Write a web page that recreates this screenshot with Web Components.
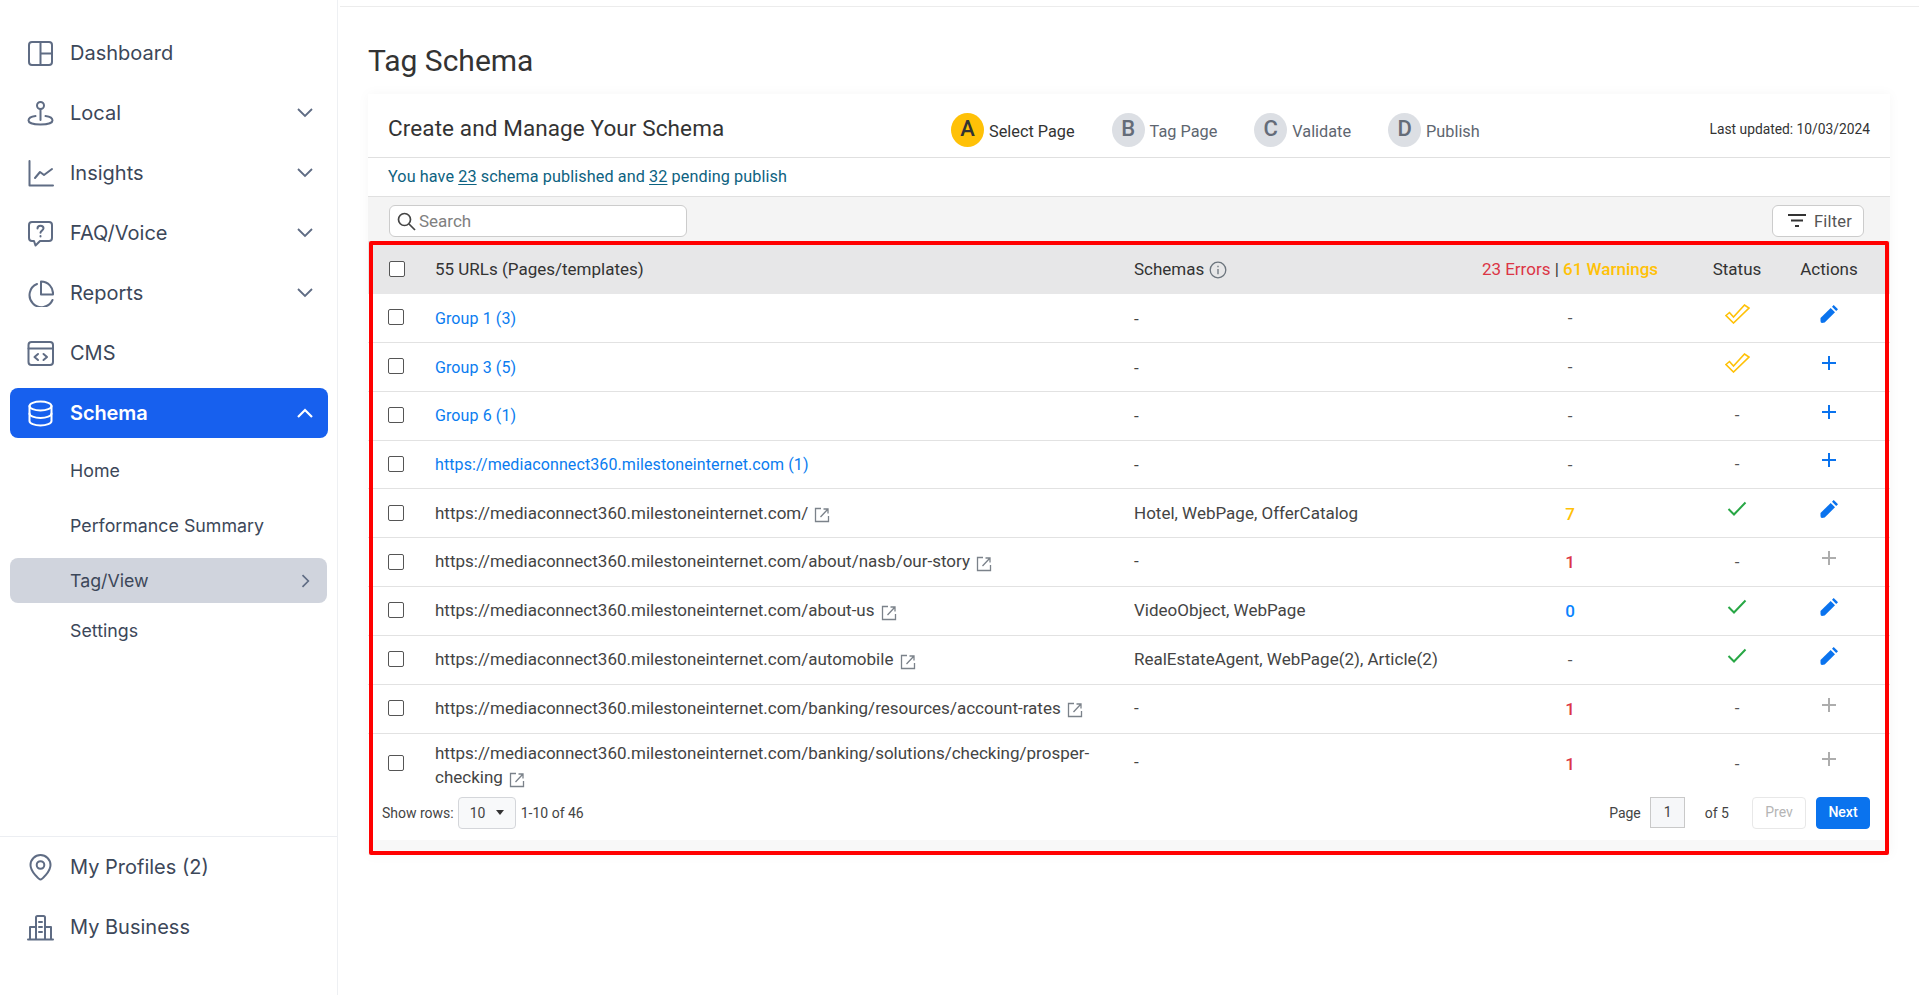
<!DOCTYPE html>
<html lang="en">
<head>
<meta charset="utf-8">
<title>Tag Schema</title>
<style>
  html,body{ margin:0; height:100%; background:#fff; overflow:hidden; }
  body{ font-family:Roboto, "Liberation Sans", sans-serif; }
</style>
</head>
<body>
<app-shell>
  <side-bar slot="side">
    <nav-item icon="dashboard">Dashboard</nav-item>
    <nav-item icon="local" chevron="down">Local</nav-item>
    <nav-item icon="insights" chevron="down">Insights</nav-item>
    <nav-item icon="faq" chevron="down">FAQ/Voice</nav-item>
    <nav-item icon="reports" chevron="down">Reports</nav-item>
    <nav-item icon="cms">CMS</nav-item>
    <nav-item icon="schema" chevron="up" active>Schema</nav-item>
    <sub-item>Home</sub-item>
    <sub-item>Performance Summary</sub-item>
    <sub-item current>Tag/View</sub-item>
    <sub-item tight>Settings</sub-item>
    <nav-item slot="bottom" icon="profile">My Profiles (2)</nav-item>
    <nav-item slot="bottom" icon="business">My Business</nav-item>
  </side-bar>
  <schema-card>
    <schema-table>
      <schema-row head>
        <span slot="url">55 URLs (Pages/templates)</span>
        <span slot="schemas">Schemas <i-icon name="info"></i-icon></span>
        <span slot="issues"><b style="color:#dc3545;font-weight:450">23 Errors</b> | <b style="color:#ffc107;font-weight:500">61 Warnings</b></span>
        <span slot="status">Status</span>
        <span slot="action">Actions</span>
      </schema-row>
      <schema-row link status="double" action="edit"><span slot="url">Group 1 (3)</span></schema-row>
      <schema-row link status="double" action="add"><span slot="url">Group 3 (5)</span></schema-row>
      <schema-row link action="add"><span slot="url">Group 6 (1)</span></schema-row>
      <schema-row link action="add"><span slot="url">https://mediaconnect360.milestoneinternet.com (1)</span></schema-row>
      <schema-row ext value="7" tone="warn" status="ok" action="edit"><span slot="url">https://mediaconnect360.milestoneinternet.com/</span><span slot="schemas">Hotel, WebPage, OfferCatalog</span></schema-row>
      <schema-row ext value="1" tone="err" action="off"><span slot="url">https://mediaconnect360.milestoneinternet.com/about/nasb/our-story</span></schema-row>
      <schema-row ext value="0" tone="info" status="ok" action="edit"><span slot="url">https://mediaconnect360.milestoneinternet.com/about-us</span><span slot="schemas">VideoObject, WebPage</span></schema-row>
      <schema-row ext status="ok" action="edit"><span slot="url">https://mediaconnect360.milestoneinternet.com/automobile</span><span slot="schemas">RealEstateAgent, WebPage(2), Article(2)</span></schema-row>
      <schema-row ext value="1" tone="err" action="off"><span slot="url">https://mediaconnect360.milestoneinternet.com/banking/resources/account-rates</span></schema-row>
      <schema-row ext tall value="1" tone="err" action="off"><span slot="url">https://mediaconnect360.milestoneinternet.com/banking/solutions/checking/prosper-checking</span></schema-row>
      <table-footer slot="footer"></table-footer>
    </schema-table>
  </schema-card>
</app-shell>

<script>
/* ============================================================
   Icons
   ============================================================ */
const ICONS = {
  dashboard:`<rect x="2" y="2" width="23" height="23" rx="3"/><path d="M13.5 2v23M13.5 13.5H25"/>`,
  local:`<circle cx="13.5" cy="5.5" r="3.5"/><path d="M13.5 9v11"/><path d="M8.5 16C4.500 16.500 1.500 18 1.500 20.500c0 2.500 5.300 4 12 4s12-1.500 12-4c0-2.500-3-4-7-4.500"/>`,
  insights:`<path d="M2.5 1v24.500H26"/><path d="M8 18l5-6 4 3 8-6"/>`,
  faq:`<path d="M5 2h17a3 3 0 0 1 3 3v13a3 3 0 0 1-3 3h-9l-4.500 4.500L7 21H5a3 3 0 0 1-3-3V5a3 3 0 0 1 3-3z"/><path d="M10.5 8.500c0-1.700 1.200-2.700 3-2.700s3 1 3 2.500c0 2.300-3 2.300-3 4.400"/><path d="M13.5 16v.5"/>`,
  reports:`<path d="M10 4A12 12 0 1 0 25.500 20"/><path d="M14 1.500A12 12 0 0 1 26 14.500H14z"/>`,
  cms:`<rect x="1.5" y="2" width="24.500" height="23" rx="3"/><path d="M1.5 8.500H26"/><path d="M11 14l-3.500 3 3.500 3M16.500 14l3.500 3-3.500 3"/>`,
  schema:`<ellipse cx="13.5" cy="6" rx="11" ry="4.500"/><path d="M2.5 6v15c0 2.500 5 4.500 11 4.500s11-2 11-4.500V6"/><path d="M2.5 13.500c0 2.500 5 4.500 11 4.500s11-2 11-4.500"/>`,
  profile:`<path d="M13.5 25.500c-1 0-10-7.500-10-14.500a10 10 0 0 1 20 0c0 7-9 14.500-10 14.500z"/><circle cx="13.5" cy="11" r="3.800"/>`,
  business:`<path d="M1 25.500h25"/><path d="M3 25V13h6M24 25V13h-6"/><path d="M9 25V3.500a1.500 1.500 0 0 1 1.500-1.500h6a1.500 1.500 0 0 1 1.500 1.500V25"/><path d="M12 8h3M12 13h3M12 18h3"/>`
};
const chevrons = {
  down:`<path d="M1 1l7 7 7-7"/>`,
  up:`<path d="M1 9l7-7 7 7"/>`,
  right:`<path d="M3 1l7 7-7 7"/>`
};

/* small table glyphs */
class IIcon extends HTMLElement{
  connectedCallback(){
    const glyphs = {
      info:`<svg width="18" height="18" viewBox="0 0 18 18" fill="none" stroke="#6c757d" stroke-width="1.3"><circle cx="9" cy="9" r="7.8"/><path d="M9 8v5.200M9 4.700v1.500"/></svg>`,
      ext:`<svg width="16" height="16" viewBox="0 0 16 16" fill="none" stroke="#7b828a" stroke-width="1.3"><path d="M7 1.500H1.500v13h13V9"/><path d="M6.500 10L13.500 2.500M9.500 2h4.500v4.500"/></svg>`,
      double:`<svg width="25" height="20" viewBox="0 0 25 20" fill="none" stroke="#ffc107" stroke-width="1.6"><path d="M1 11.500L4.500 8.500 8.500 13 19.500 1 24 4 8.500 19z"/></svg>`,
      ok:`<svg width="20" height="16" viewBox="0 0 20 16" fill="none" stroke="#28a745" stroke-width="2"><path d="M1.500 8l5.500 5.500L18.500 1.500"/></svg>`,
      edit:`<svg width="18" height="18" viewBox="0 0 18 18" fill="#0a73ee"><path d="M.5 16v-3L10.700 3l4.300 4.300L4.700 17.500 2 18q-1.500 0-1.500-2z"/><path d="M12 1.800L13.700 0 18 4.300 16.200 6z"/></svg>`,
      add:`<svg width="16" height="16" viewBox="0 0 16 16" fill="none" stroke="#0a73ee" stroke-width="2"><path d="M8 1v14M1 8h14"/></svg>`,
      off:`<svg width="16" height="16" viewBox="0 0 16 16" fill="none" stroke="#adadad" stroke-width="2"><path d="M8 1v14M1 8h14"/></svg>`,
      search:`<svg width="19" height="19" viewBox="0 0 19 19" fill="none" stroke="#444" stroke-width="1.7"><circle cx="7.500" cy="7.500" r="6"/><path d="M12 12l6 6"/></svg>`,
      filter:`<svg width="18" height="14" viewBox="0 0 18 14" fill="#333"><rect width="18" height="2"/><rect x="3" y="5.500" width="12" height="2"/><rect x="7" y="11" width="4" height="2"/></svg>`
    };
    if(!this.shadowRoot){
      this.attachShadow({mode:"open"}).innerHTML = `
        <style>:host{display:inline-flex;vertical-align:middle}</style>${glyphs[this.getAttribute("name")]||""}`;
    }
  }
}
customElements.define("i-icon", IIcon);

/* ============================================================
   Sidebar
   ============================================================ */
class NavItem extends HTMLElement{
  constructor(){
    super();
    const chev = this.getAttribute("chevron");
    this.attachShadow({mode:"open"}).innerHTML = `
      <style>
        :host{
          display:flex; align-items:center; box-sizing:border-box;
          height:50px; width:318px; margin-left:10px; padding-left:17px;
          border-radius:8px;
          color:#3c4759;
          font:400 20px Inter, sans-serif;
        }
        :host([active]){ background:#1760ee; color:#fff; font-weight:600; letter-spacing:-.1px; }
        .ic{ width:27px; height:27px; flex:none; margin-right:16px; fill:none; stroke:#5f6c84; stroke-width:2; stroke-linecap:round; stroke-linejoin:round; }
        :host([active]) .ic{ stroke:#fff; }
        .ch{ margin-left:auto; margin-right:15px; width:16px; height:10px; fill:none; stroke:#5f6c84; stroke-width:1.8; }
        :host([active]) .ch{ stroke:#fff; stroke-width:2.2; }
      </style>
      <svg class="ic" viewBox="0 0 27 27">${ICONS[this.getAttribute("icon")]||""}</svg>
      <slot></slot>
      ${chev ? `<svg class="ch" viewBox="0 0 16 10">${chevrons[chev]}</svg>` : ""}
    `;
  }
}
customElements.define("nav-item", NavItem);

class SubItem extends HTMLElement{
  constructor(){
    super();
    this.attachShadow({mode:"open"}).innerHTML = `
      <style>
        :host{
          display:flex; align-items:center; box-sizing:border-box;
          height:45px; width:317px; margin-left:10px; padding-left:60px;
          border-radius:8px;
          color:#3c4759;
          font:400 17.8px Inter, sans-serif;
        }
        :host([current]){ background:#d0d4dd; }
        :host([tight]){ margin-top:-5px; }
        svg{ margin-left:auto; margin-right:17px; width:10px; height:16px; fill:none; stroke:#5f6c84; stroke-width:2; }
      </style>
      <slot></slot>
      ${this.hasAttribute("current") ? `<svg viewBox="0 0 12 16">${chevrons.right}</svg>` : ""}
    `;
  }
}
customElements.define("sub-item", SubItem);

class SideBar extends HTMLElement{
  constructor(){
    super();
    this.attachShadow({mode:"open"}).innerHTML = `
      <style>
        :host{
          display:flex; flex-direction:column; box-sizing:border-box;
          width:338px; height:995px; flex:none;
          border-right:1px solid #eef0f3;
        }
        .top{ display:flex; flex-direction:column; gap:10px; padding-top:28px; }
        .bottom{
          margin-top:auto; display:flex; flex-direction:column; gap:10px;
          padding:5px 0 43px; border-top:1px solid #eceef2;
        }
      </style>
      <div class="top"><slot></slot></div>
      <div class="bottom"><slot name="bottom"></slot></div>
    `;
  }
}
customElements.define("side-bar", SideBar);

/* ============================================================
   Page frame
   ============================================================ */
class AppShell extends HTMLElement{
  constructor(){
    super();
    this.attachShadow({mode:"open"}).innerHTML = `
      <style>
        :host{ display:flex; width:1919px; height:995px; color:#333; }
        main{ flex:1; min-width:0; }
        .bar{ height:6px; margin-left:2px; border-bottom:1px solid #ececec; }
        h1{ margin:0; padding:39px 0 0 30px; height:48px; font:400 30px/30px Roboto, sans-serif; color:#333; }
      </style>
      <slot name="side"></slot>
      <main>
        <div class="bar"></div>
        <h1>Tag Schema</h1>
        <slot></slot>
      </main>
    `;
  }
}
customElements.define("app-shell", AppShell);

class StepBadge extends HTMLElement{
  constructor(){
    super();
    this.attachShadow({mode:"open"}).innerHTML = `
      <style>
        :host{ display:inline-flex; align-items:center; gap:5px; font:400 16.3px Roboto, sans-serif; color:#5e6670; }
        :host([on]){ color:#333; }
        b{
          width:33px; height:34px; border-radius:50%;
          background:#dcdfe4; color:#646c78;
          font:500 22px/32px Roboto, sans-serif; text-align:center;
        }
        :host([on]) b{ background:#ffc107; color:#333; }
        span{ padding-top:2px; }
      </style>
      <b>${this.getAttribute("letter")}</b><span><slot></slot></span>
    `;
  }
}
customElements.define("step-badge", StepBadge);

class SchemaCard extends HTMLElement{
  constructor(){
    super();
    this.attachShadow({mode:"open"}).innerHTML = `
      <style>
        :host{
          display:block; box-sizing:border-box;
          width:1522px; margin:0 0 0 30px;
          background:#fff; box-shadow:0 0 12px rgba(0,0,0,.04);
        }
        header{
          display:flex; align-items:center; box-sizing:border-box;
          height:64px; padding:0 20px; border-bottom:1.5px solid #e0e0e0;
        }
        h2{ margin:4px 0 0; width:563px; font:450 22.5px Roboto, sans-serif; letter-spacing:.1px; color:#333; }
        .steps{ display:flex; gap:37px; margin-top:9px; }
        .upd{ margin:6px 0 0 auto; font:450 13.8px Roboto, sans-serif; color:#333; }
        .note{
          box-sizing:border-box; height:39px; padding:0 20px 2px; border-bottom:1px solid #e0e0e0;
          display:flex; align-items:center; white-space:pre;
          font:400 16.2px Roboto, sans-serif; letter-spacing:.1px; color:#0d6281;
        }
        .note u{ text-underline-offset:2px; }
        .tools{
          box-sizing:border-box; height:44px; padding:8px 26px 0 21px; background:#f4f4f4;
          display:flex; justify-content:space-between; align-items:flex-start;
        }
        .search{
          display:flex; align-items:center; gap:3px; box-sizing:border-box;
          width:298px; height:32px; padding-left:7px;
          background:#fff; border:1px solid #ccc; border-radius:6px;
          font:400 17px Roboto, sans-serif; color:#808080;
        }
        .filter{
          display:flex; align-items:center; gap:8px; box-sizing:border-box;
          width:92px; height:32px; padding-left:15px;
          background:#fff; border:1px solid #ccc; border-radius:6px;
          font:400 16.5px Roboto, sans-serif; letter-spacing:.2px; color:#555;
        }
      </style>
      <header>
        <h2>Create and Manage Your Schema</h2>
        <div class="steps">
          <step-badge letter="A" on>Select Page</step-badge>
          <step-badge letter="B">Tag Page</step-badge>
          <step-badge letter="C">Validate</step-badge>
          <step-badge letter="D">Publish</step-badge>
        </div>
        <div class="upd">Last updated: 10/03/2024</div>
      </header>
      <div class="note">You have <u>23</u> schema published and <u>32</u> pending publish</div>
      <div class="tools">
        <div class="search"><i-icon name="search"></i-icon>Search</div>
        <div class="filter"><i-icon name="filter"></i-icon>Filter</div>
      </div>
      <slot></slot>
    `;
  }
}
customElements.define("schema-card", SchemaCard);

/* ============================================================
   Table
   ============================================================ */
class SchemaTable extends HTMLElement{
  constructor(){
    super();
    this.attachShadow({mode:"open"}).innerHTML = `
      <style>
        :host{ display:block; position:relative; padding-bottom:15px; background:#f8f8f8; }
        .rows{ background:#fff; }
        /* red annotation drawn on top of the table */
        .mark{
          position:absolute; left:1px; right:1px; top:0; bottom:0;
          border:4px solid #f00; border-radius:2px; pointer-events:none;
        }
      </style>
      <div class="rows"><slot></slot><slot name="footer"></slot></div>
      <div class="mark"></div>
    `;
  }
}
customElements.define("schema-table", SchemaTable);

class SchemaRow extends HTMLElement{
  constructor(){
    super();
    const a = n => this.getAttribute(n);
    const tones = {warn:"#ffc107", err:"#dc3545", info:"#0a84ff"};
    const dash = `<span class="dash">-</span>`;
    const val = a("value") ? `<span style="color:${tones[a("tone")]};font-weight:500">${a("value")}</span>` : dash;
    const status = a("status") ? `<i-icon name="${a("status")=="ok"?"ok":"double"}"></i-icon>` : dash;
    this.attachShadow({mode:"open"}).innerHTML = `
      <style>
        :host{
          display:grid; grid-template-columns:67px 699px 336px 200px 134px 50px 36px;
          box-sizing:border-box; height:48.85px; align-items:center;
          border-bottom:1px solid #e2e2e2;
          font:400 17px/24.5px Roboto, sans-serif; color:#444;
        }
        :host([head]){ height:53px; background:#e7e7e8; border:0; color:#333; padding-top:3px; font-weight:450; }
        :host([tall]){ height:59px; border:0; }
        :host([tall]) .url{ margin-top:4px; }
        :host([tall]) .issues, :host([tall]) .dash{ padding-top:2px; }
        :host([tall]) .box{ margin-top:0; }
        :host([tall]) .action i-icon{ margin-top:-4px; }
        :host([link]) .url{ color:#0a7cf0; font-size:16px; letter-spacing:.1px; margin-top:2px; }
        :host(:not([link]):not([tall]):not([head])) .url{ margin-top:-1px; }
        :host(:not([head])) .schemas{ margin-top:-1px; }
        :host([link]) .schemas{ margin-top:2px; }
        :host(:not([head])) .issues{ margin-top:1px; }
        .box{
          box-sizing:border-box; width:16px; height:16px; margin:-1px 0 0 20px;
          border:1.8px solid #555; border-radius:2px; background:#fff;
        }
        :host([head]) .box{ margin-left:21px; margin-top:0; }
        .url{ padding-right:20px; }
        .url i-icon{ margin:2px 0 0 2px; }
        .issues,.status,.action{ text-align:center; }
        .status,.action{ display:flex; justify-content:center; }
        :host(:not([head])) .status i-icon, :host(:not([head])) .action i-icon{ margin-top:-8px; }
        .dash{ color:#555; }
      </style>
      <div class="box"></div>
      <div class="url"><slot name="url"></slot>${this.hasAttribute("ext") ? ` <i-icon name="ext"></i-icon>` : ""}</div>
      <div class="schemas"><slot name="schemas">-</slot></div>
      <div class="issues"><slot name="issues">${val}</slot></div>
      <div class="status"><slot name="status">${status}</slot></div>
      <div class="action"><slot name="action">${a("action") ? `<i-icon name="${a("action")}"></i-icon>` : ""}</slot></div>
    `;
  }
}
customElements.define("schema-row", SchemaRow);

class TableFooter extends HTMLElement{
  constructor(){
    super();
    this.attachShadow({mode:"open"}).innerHTML = `
      <style>
        :host{
          display:flex; align-items:center; box-sizing:border-box;
          height:47px; padding:3px 20px 10px 14px; background:#fff;
          font:400 14px Roboto, sans-serif; color:#444;
        }
        .sel{
          display:flex; align-items:center; box-sizing:border-box;
          width:58px; height:32px; margin:0 5px 0 4px; padding-left:11px; gap:11px;
          background:#f8f9fa; border:1px solid #d4d6da; border-radius:4px;
        }
        .sel::after{ content:""; border:4.5px solid transparent; border-top:5px solid #333; border-bottom:0; }
        .right{ margin-left:auto; display:flex; align-items:center; }
        .pg{
          box-sizing:border-box; width:35px; height:31px; margin:0 20px 0 9px; padding-left:13px;
          line-height:28px; background:#f6f7f9; border:1px solid #c9c9c9;
        }
        .btn{
          box-sizing:border-box; width:54px; height:32px; margin-left:10px;
          border-radius:4px; text-align:center; line-height:29px; font-weight:500;
          border:1px solid #0a73ee; background:#0a73ee; color:#fff;
        }
        .btn.off{ margin-left:23px; background:#fff; border-color:#e8e8e8; color:#b5b5b5; font-weight:400; }
      </style>
      <span>Show rows:</span>
      <div class="sel">10</div>
      <span>1-10 of 46</span>
      <div class="right">
        <span>Page</span><div class="pg">1</div><span>of 5</span>
        <div class="btn off">Prev</div><div class="btn">Next</div>
      </div>
    `;
  }
}
customElements.define("table-footer", TableFooter);
</script>
</body>
</html>
